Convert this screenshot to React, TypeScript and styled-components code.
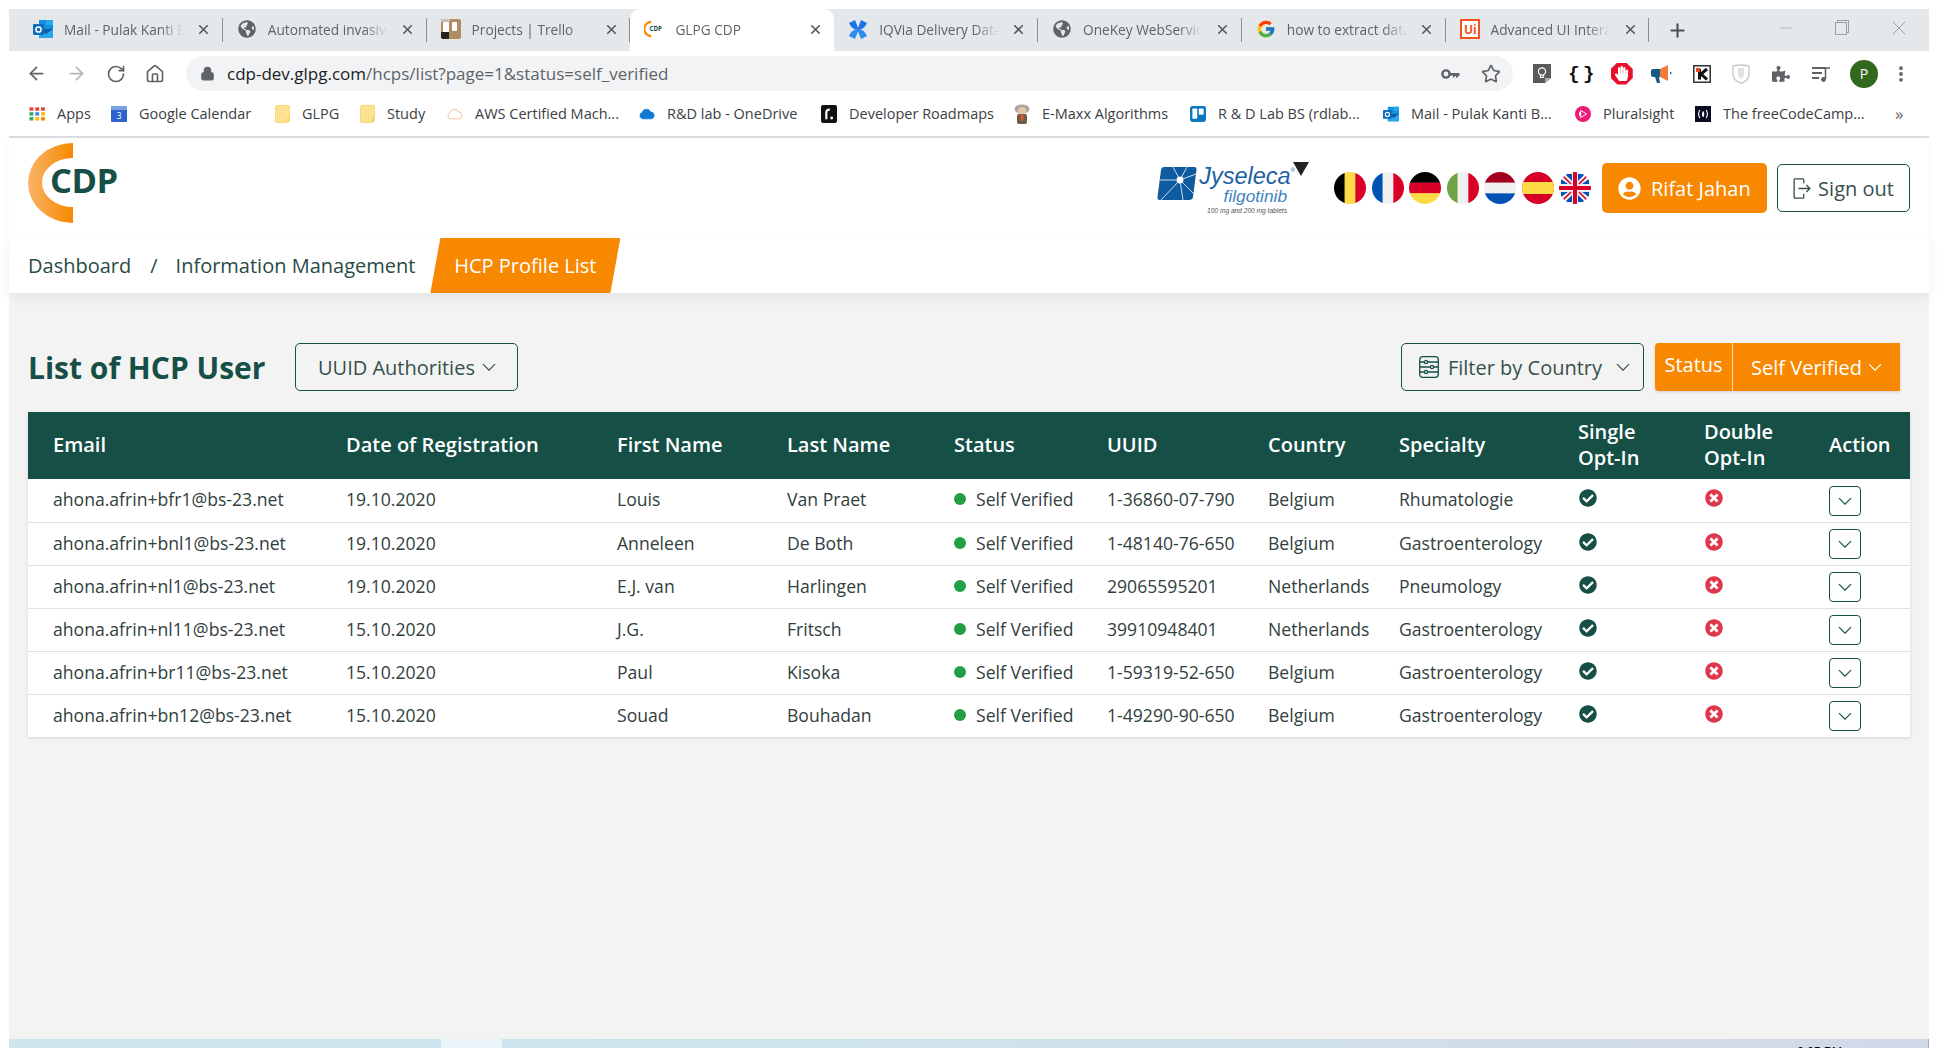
import React from 'react'
import styled, { createGlobalStyle } from 'styled-components'
import { ArrowLeft, ArrowRight, RotateCw, Home, Lock, Star, X, Plus, Minus, MoreVertical } from 'lucide-react'
import { FaGlobeAmericas, FaPuzzlePiece, FaCheckCircle, FaTimesCircle, FaUserCircle, FaHandPaper } from 'react-icons/fa'
import { FcGoogle } from 'react-icons/fc'

const GREEN = '#154f46'
const ORANGE = '#f78800'

const GlobalStyle = createGlobalStyle`
  * { box-sizing: border-box; }
  html, body { margin: 0; padding: 0; background: #fff; }
  body { font-family: "Open Sans", "Noto Sans", sans-serif; color: #2d3f3c; }
`

const Frame = styled.div`
  height: 1048px;
  padding: 9px 9px 0;
  display: flex;
  flex-direction: column;
  overflow: hidden;
`
const TabStrip = styled.div`
  height: 42px;
  background: #e5e8eb;
  display: flex;
  align-items: stretch;
  padding-left: 10px;
  flex-shrink: 0;
`
const Tab = styled.div<{ $active?: boolean }>`
  width: 203.8px;
  display: flex;
  align-items: center;
  padding: 0 7px 2px 14px;
  background: ${(p) => (p.$active ? '#fff' : 'transparent')};
  border-radius: ${(p) => (p.$active ? '10px 10px 0 0' : '0')};
  position: relative;
  &::after {
    content: '';
    display: ${(p) => (p.$active ? 'none' : 'block')};
    position: absolute;
    right: 0;
    top: 9px;
    bottom: 9px;
    width: 1px;
    background: #8a8f93;
  }
`
const TabIcon = styled.span`
  width: 20px;
  height: 20px;
  display: flex;
  align-items: center;
  justify-content: center;
  flex-shrink: 0;
  margin-right: 11px;
`
const TabTitle = styled.span`
  flex: 1;
  font-size: 13.7px;
  color: #5f6368;
  white-space: nowrap;
  overflow: hidden;
  -webkit-mask-image: linear-gradient(to right, #000 80%, transparent 100%);
  mask-image: linear-gradient(to right, #000 80%, transparent 100%);
`
const TabClose = styled.span`
  width: 24px;
  display: flex;
  justify-content: center;
  color: #55595e;
  margin-left: 8px;
`
const NewTab = styled.span`
  margin-left: 18px;
  display: flex;
  align-items: center;
  color: #4d5156;
`
const WindowButtons = styled.div`
  margin-left: auto;
  display: flex;
  align-items: center;
  gap: 40px;
  padding-right: 18px;
  padding-bottom: 4px;
  color: #9aa0a6;
`
const Restore = styled.span`
  width: 12px;
  height: 13px;
  border: 1px solid #9aa0a6;
  box-shadow: 2px -2px 0 -1px #e5e8eb, 2px -2px 0 0 #9aa0a6;
`
const BrowserBar = styled.div`
  height: 45px;
  display: flex;
  align-items: center;
  flex-shrink: 0;
`
const NavIcons = styled.div`
  width: 177px;
  padding-left: 17px;
  display: flex;
  align-items: center;
  gap: 19px;
  flex-shrink: 0;
  color: #5f6368;
`
const AddressBar = styled.div`
  width: 1327px;
  height: 35px;
  background: #f1f3f4;
  border-radius: 18px;
  display: flex;
  align-items: center;
  padding: 0 12px 0 14px;
  color: #5f6368;
`
const Url = styled.span`
  margin-left: 12px;
  flex: 1;
  font-size: 17px;
  color: #5f6368;
  white-space: nowrap;
  b { font-weight: 400; color: #202124; }
`
const AddressActions = styled.div`
  display: flex;
  align-items: center;
  gap: 21px;
  color: #5f6368;
`
const Extensions = styled.div`
  flex: 1;
  display: flex;
  align-items: center;
  justify-content: space-between;
  padding: 0 23px 0 18px;
`
const Ext = styled.span`
  width: 22px;
  height: 22px;
  display: flex;
  align-items: center;
  justify-content: center;
  color: #5f6368;
`
const KebabExt = styled(Ext)`
  width: 10px;
`
const StopBadge = styled.span`
  width: 22px;
  height: 22px;
  background: #e8102a;
  clip-path: polygon(30% 0, 70% 0, 100% 30%, 100% 70%, 70% 100%, 30% 100%, 0 70%, 0 30%);
  color: #fff;
  display: flex;
  align-items: center;
  justify-content: center;
`
const Braces = styled.span`
  font-family: "Liberation Mono", monospace;
  font-size: 19px;
  font-weight: 700;
  color: #111;
  white-space: nowrap;
  letter-spacing: -4px;
  margin-left: -5px;
`
const Avatar = styled.span`
  width: 28px;
  height: 28px;
  border-radius: 50%;
  background: #33691e;
  color: #fff;
  font-size: 14px;
  display: flex;
  align-items: center;
  justify-content: center;
`
const BookmarkBar = styled.div`
  height: 42px;
  display: flex;
  align-items: center;
  padding-left: 20px;
  flex-shrink: 0;
  border-bottom: 2px solid #dcdce4;
  padding-bottom: 5px;
`
const Bookmark = styled.div<{ $width: number }>`
  width: ${(p) => p.$width}px;
  flex-shrink: 0;
  display: flex;
  align-items: center;
  gap: 12px;
  font-size: 14.5px;
  color: #3c4043;
  white-space: nowrap;
`
const BookmarkIcon = styled.span`
  width: 16px;
  height: 16px;
  flex-shrink: 0;
  display: flex;
  align-items: center;
  justify-content: center;
`
const More = styled.span`
  margin-left: 4px;
  font-size: 17px;
  color: #5f6368;
`

const Header = styled.header`
  height: 100px;
  flex-shrink: 0;
  background: #fff;
  display: flex;
  align-items: center;
  justify-content: space-between;
  padding: 0 19px;
  box-shadow: 0 2px 6px rgba(0, 0, 0, 0.04);
  position: relative;
`
const LogoBox = styled.div`
  position: relative;
  width: 95px;
  height: 80px;
  margin-top: -10px;
`
const LogoText = styled.span`
  position: absolute;
  left: 22px;
  top: 16px;
  font-size: 34.5px;
  font-weight: 700;
  line-height: 42px;
  letter-spacing: -0.5px;
  color: ${GREEN};
`
const HeaderRight = styled.div`
  display: flex;
  align-items: center;
`
const Brand = styled.div`
  position: relative;
  width: 152px;
  height: 50px;
  display: flex;
  gap: 4px;
  margin-right: 25px;
  svg { margin-top: 3px; flex-shrink: 0; }
`
const BrandText = styled.div`
  display: flex;
  flex-direction: column;
  align-items: flex-end;
  width: 94px;
  font-style: italic;
  font-family: "Liberation Sans", sans-serif;
  color: #1c5fa5;
`
const BrandName = styled.span`
  font-size: 23.5px;
  line-height: 24px;
  margin-top: 1px;
  white-space: nowrap;
  sup { font-size: 6px; vertical-align: top; line-height: 12px; }
`
const BrandGeneric = styled.span`
  font-size: 17.3px;
  line-height: 16px;
  margin-right: 8px;
  color: #3d82c4;
`
const BrandDose = styled.span`
  font-size: 6.6px;
  line-height: 9px;
  margin: 2px 8px 0 0;
  white-space: nowrap;
  color: #555;
`
const Caret = styled.span`
  position: absolute;
  right: 0;
  top: -1px;
  width: 0;
  height: 0;
  border-left: 8.5px solid transparent;
  border-right: 8.5px solid transparent;
  border-top: 14px solid #222;
`
const Flags = styled.div`
  display: flex;
  gap: 5.5px;
  margin-right: 11px;
`
const Flag = styled.span`
  width: 32px;
  height: 32px;
  border-radius: 50%;
  overflow: hidden;
  display: block;
  svg { display: block; }
`
const UserButton = styled.div`
  width: 165px;
  height: 50px;
  background: ${ORANGE};
  border-radius: 5px;
  color: #fff;
  font-size: 20px;
  display: flex;
  align-items: center;
  gap: 10px;
  padding-left: 16px;
  margin-right: 10px;
  white-space: nowrap;
`
const OutlineButton = styled.div<{ $width: number }>`
  width: ${(p) => p.$width}px;
  height: 48px;
  border: 1px solid ${GREEN};
  border-radius: 5px;
  background: transparent;
  color: #35504c;
  font-size: 20px;
  display: flex;
  align-items: center;
  justify-content: center;
  gap: 7px;
  white-space: nowrap;
`
const FilterButton = styled(OutlineButton)`
  gap: 9px;
  padding-left: 4px;
`
const Breadcrumb = styled.nav`
  height: 55px;
  flex-shrink: 0;
  background: #fff;
  display: flex;
  align-items: center;
  padding-left: 19px;
  font-size: 20px;
  color: #2a4a46;
  box-shadow: 0 4px 12px rgba(0, 0, 0, 0.07);
  position: relative;
`
const Crumb = styled.span`
  white-space: nowrap;
`
const Slash = styled.span`
  margin: 0 18px 0 19px;
`
const ActiveCrumb = styled.span`
  height: 100%;
  width: 190px;
  margin-left: 15px;
  display: flex;
  align-items: center;
  justify-content: center;
  background: ${ORANGE};
  color: #fff;
  clip-path: polygon(10px 0, 100% 0, calc(100% - 10px) 100%, 0 100%);
`
const Main = styled.main`
  flex: 1;
  background: #f3f3f3;
  padding: 50px 19px 0;
`
const Toolbar = styled.div`
  height: 48px;
  display: flex;
  align-items: center;
  gap: 30px;
  margin-bottom: 21px;
`
const Title = styled.h1`
  margin: 0;
  font-size: 30px;
  font-weight: 700;
  color: ${GREEN};
  white-space: nowrap;
`
const ToolbarRight = styled.div`
  margin-left: auto;
  display: flex;
  gap: 11px;
  padding-right: 10px;
`
const FilterChevron = styled.span`
  display: flex;
  margin-left: 5px;
`
const StatusGroup = styled.div`
  width: 245px;
  height: 48px;
  background: ${ORANGE};
  border-radius: 4px 0 0 4px;
  color: #fff;
  display: flex;
  box-shadow: 0 1px 3px rgba(0, 0, 0, 0.15);
`
const StatusLabel = styled.span`
  width: 78px;
  border-right: 1px solid #ffd9a8;
  font-size: 20px;
  display: flex;
  align-items: center;
  justify-content: center;
  padding-bottom: 5px;
`
const StatusValue = styled.span`
  flex: 1;
  font-size: 20px;
  white-space: nowrap;
  display: flex;
  align-items: center;
  justify-content: center;
  gap: 6px;
`
const Table = styled.table`
  width: 100%;
  table-layout: fixed;
  border-collapse: collapse;
  background: #fff;
  box-shadow: 0 1px 3px rgba(0, 0, 0, 0.12);
`
const Th = styled.th`
  height: 67px;
  background: ${GREEN};
  color: #fff;
  font-size: 20px;
  font-weight: 600;
  line-height: 26px;
  text-align: left;
  padding: 0 0 1px 25px;
  white-space: nowrap;
`
const Tr = styled.tr`
  height: 43px;
  border-bottom: 1px solid #dee2e6;
  &:last-child { border-bottom: 0; }
`
const Td = styled.td`
  font-size: 17.6px;
  color: #30403d;
  padding: 0 0 2px 25px;
  white-space: nowrap;
`
const StatusCell = styled.span`
  display: flex;
  align-items: center;
  gap: 10px;
`
const Dot = styled.span`
  width: 12px;
  height: 12px;
  border-radius: 50%;
  background: #22a045;
`
const OptIcon = styled.span<{ $color: string }>`
  display: flex;
  color: ${(p) => p.$color};
  margin: -2px 0 0 1px;
`
const ActionButton = styled.span`
  width: 32px;
  height: 30px;
  margin-top: 3px;
  border: 1px solid ${GREEN};
  border-radius: 4px;
  display: flex;
  align-items: center;
  justify-content: center;
  color: ${GREEN};
`
const Taskbar = styled.div`
  height: 9px;
  flex-shrink: 0;
  display: flex;
  justify-content: flex-end;
  overflow: hidden;
  background: linear-gradient(to right, #cde5ec 0%, #cde5ec 22.5%, #e8f4f8 22.5%, #e8f4f8 25.7%, #cde5ec 25.7%, #cfe2ea 60%, #d3d8e8 100%);
  border-right: 1px solid #9fb0c8;
  padding-right: 86px;
`
const Clock = styled.span`
  font-family: "Liberation Sans", sans-serif;
  font-size: 12px;
  line-height: 14px;
  margin-top: 6px;
  color: #000;
`

const OutlookIcon = () => (
  <svg width="20" height="18" viewBox="0 0 20 18">
    <rect x="6" y="0" width="14" height="9" fill="#1490df" />
    <rect x="13" y="0" width="7" height="5" fill="#28a8ea" />
    <path d="M6 9 H20 V17 Q20 18 19 18 H7 Q6 18 6 17 Z" fill="#0a5ca8" />
    <path d="M6 9 L13 14 L20 9 V18 H6 Z" fill="#28a8ea" />
    <rect x="0" y="4" width="11" height="11" rx="1" fill="#0f6cbd" />
    <circle cx="5.5" cy="9.5" r="2.6" fill="none" stroke="#fff" strokeWidth="1.5" />
  </svg>
)
const TrelloTabIcon = () => (
  <svg width="20" height="20" viewBox="0 0 20 20">
    <rect width="20" height="20" rx="2" fill="#b08c64" />
    <rect x="0" y="0" width="9" height="3" fill="#c7bfb2" />
    <rect x="2" y="3" width="6" height="14" rx="1" fill="#fff" />
    <rect x="11" y="3" width="5" height="9" rx="1" fill="#fff" />
    <path d="M0 13 H8 V20 H2 Q0 20 0 18 Z" fill="#24211e" />
  </svg>
)
const CdpFavicon = () => (
  <svg width="22" height="20" viewBox="0 0 22 20">
    <path d="M8 1 A9 9 0 0 0 8 19 L8 16.5 A6.5 6.5 0 0 1 8 3.5 Z" fill={ORANGE} />
    <text x="6" y="12.5" fontSize="6.8" fontWeight="700" fill={GREEN} fontFamily="Open Sans">CDP</text>
  </svg>
)
const IqviaIcon = () => (
  <svg width="20" height="21" viewBox="0 0 20 21">
    <path d="M1 4 L7 1 Q9 6 10 9 Q11 6 13 1 L19 4 Q16 11 10 11 Q4 11 1 4 Z" fill="#1a73e8" />
    <path d="M1 17 L7 20 Q9 15 10 12.5 Q11 15 13 20 L19 17 Q16 10 10 10 Q4 10 1 17 Z" fill="#2f8cf0" />
  </svg>
)
const UiIcon = () => (
  <svg width="20" height="20" viewBox="0 0 20 20">
    <rect x="1" y="1" width="18" height="18" fill="#fff" stroke="#f4511e" strokeWidth="2" />
    <text x="4" y="15" fontSize="12" fontWeight="700" fill="#f4511e" fontFamily="Open Sans">Ui</text>
  </svg>
)
const Folder = () => (
  <svg width="15" height="18" viewBox="0 0 15 18">
    <path d="M2 0.5 H13 Q14.5 0.5 14.5 2 V14 L12 17.5 H2 Q0.5 17.5 0.5 16 V2 Q0.5 0.5 2 0.5 Z" fill="#fde293" stroke="#f4d25f" strokeWidth="0.8" />
    <rect x="12" y="13" width="2.5" height="4" fill="#f4d25f" />
  </svg>
)
const AppsIcon = () => (
  <svg width="18" height="16" viewBox="0 0 18 16">
    {['#ea4335', '#ea4335', '#ea4335', '#34a853', '#4285f4', '#fbbc04', '#34a853', '#fbbc04', '#ea8600'].map((c, i) => (
      <rect key={i} x={0.5 + (i % 3) * 6.5} y={0.5 + Math.floor(i / 3) * 5.5} width="4.4" height="3.8" fill={c} />
    ))}
  </svg>
)
const CalendarIcon = () => (
  <svg width="20" height="20" viewBox="0 0 20 20">
    <rect y="0" width="20" height="20" rx="1" fill="#2e63cf" />
    <rect y="0" width="20" height="5" fill="#7b9fe3" />
    <text x="10" y="16" fontSize="11" textAnchor="middle" fill="#fff" fontFamily="Open Sans">3</text>
  </svg>
)
const CloudIcon = ({ fill, stroke }: { fill: string; stroke: string }) => (
  <svg width="20" height="14" viewBox="0 0 20 14">
    <path d="M5 13 A4 4 0 0 1 4 5.2 A5.5 5.5 0 0 1 14.5 4.5 A4.3 4.3 0 0 1 15.5 13 Z" fill={fill} stroke={stroke} strokeWidth="1" />
  </svg>
)
const TrelloIcon = () => (
  <svg width="20" height="20" viewBox="0 0 20 20">
    <rect width="20" height="20" rx="3" fill="#0b79bf" />
    <rect x="3" y="3" width="6" height="13" rx="1" fill="#fff" />
    <rect x="11" y="3" width="6" height="8" rx="1" fill="#fff" />
  </svg>
)
const EmaxxIcon = () => (
  <svg width="16" height="20" viewBox="0 0 16 20">
    <ellipse cx="8" cy="5" rx="7.5" ry="4.6" fill="#a9a5a0" />
    <ellipse cx="8" cy="6.5" rx="4" ry="3.6" fill="#e3c9a8" />
    <rect x="3" y="10" width="10" height="10" rx="2" fill="#6f5a43" />
    <rect x="6.5" y="10.5" width="3" height="6" fill="#d65c3a" />
  </svg>
)
const PluralsightIcon = () => (
  <svg width="20" height="20" viewBox="0 0 20 20">
    <circle cx="10" cy="10" r="10" fill="#ec1b78" />
    <path d="M7 5.5 L14.5 10 L7 14.5 Z" fill="none" stroke="#fff" strokeWidth="1.2" />
    <path d="M5 7.5 L8.5 10 L5 12.5 Z" fill="#fff" />
  </svg>
)
const FreeCodeIcon = () => (
  <svg width="20" height="20" viewBox="0 0 20 20">
    <rect width="20" height="20" fill="#0a0a23" />
    <path d="M6 5 Q3 10 6 15 M14 5 Q17 10 14 15" stroke="#fff" strokeWidth="1.4" fill="none" />
    <path d="M10 6 Q13 10 10.5 14 Q7 12 10 6 Z" fill="#fff" />
  </svg>
)
const RoadmapIcon = () => (
  <svg width="18" height="20" viewBox="0 0 18 20">
    <rect width="18" height="20" rx="2" fill="#111" />
    <path d="M6 16 V8 Q6 5 10 5" stroke="#fff" strokeWidth="2.4" fill="none" />
    <circle cx="12" cy="14.5" r="1.6" fill="#fff" />
  </svg>
)
const KeyIcon = () => (
  <svg width="19" height="12" viewBox="0 0 19 12">
    <circle cx="5" cy="6" r="3.6" fill="none" stroke="#5f6368" strokeWidth="2.4" />
    <path d="M9 5 H18.5 V8 H17 V9.5 H15 V8 H13.5 V9.5 H12 V7.5 H9 Z" fill="#5f6368" />
  </svg>
)
const KeepIcon = () => (
  <svg width="20" height="21" viewBox="0 0 20 21">
    <path d="M1 1 H19 V15 L13 20 H1 Z" fill="#5a5a5a" />
    <path d="M13 20 V15 H19 Z" fill="#a9a9a9" />
    <circle cx="10" cy="8.5" r="3.6" fill="none" stroke="#fff" strokeWidth="1.2" />
    <path d="M8.5 12 V14.5 H11.5 V12" fill="none" stroke="#fff" strokeWidth="1.2" />
  </svg>
)
const MegaphoneIcon = () => (
  <svg width="21" height="20" viewBox="0 0 21 20">
    <path d="M0 7 Q0 5 2 5 H9 V13 H2 Q0 13 0 11 Z" fill="#155a82" />
    <path d="M4 13 H8 L9 19 H6 Z" fill="#155a82" />
    <path d="M9 5 L17 1 V17 L9 13 Z" fill="#f5793a" />
    <path d="M19 7.5 L21 9 L19 10.5 Z" fill="#155a82" />
  </svg>
)
const ShieldIcon = () => (
  <svg width="18" height="20" viewBox="0 0 18 20">
    <path d="M1 2 Q9 0 17 2 V10 Q17 16 9 19.5 Q1 16 1 10 Z" fill="#fff" stroke="#c6c9cc" strokeWidth="1.4" />
    <path d="M6 4 H12 V10 Q12 13 9 15 Q6 13 6 10 Z" fill="#dfe1e3" />
  </svg>
)
const KIcon = () => (
  <svg width="18" height="18" viewBox="0 0 18 18">
    <rect x="0.8" y="0.8" width="16.4" height="16.4" fill="#fff" stroke="#222" strokeWidth="1.4" />
    <path d="M6.5 4 V14.5 M14 4 L8 9 L14 14.5" stroke="#111" strokeWidth="3" fill="none" />
    <rect x="3" y="3" width="4" height="4" fill="#e8431f" />
  </svg>
)
const QueueIcon = () => (
  <svg width="20" height="18" viewBox="0 0 20 18">
    <path d="M1 3 H15 M1 8 H11 M1 13 H8" stroke="#5f6368" strokeWidth="1.8" />
    <path d="M14.5 14 V3 H19" stroke="#5f6368" strokeWidth="1.6" fill="none" />
    <circle cx="12.5" cy="14.5" r="2.4" fill="#5f6368" />
  </svg>
)
const MainLogo = () => (
  <svg width="45" height="80" viewBox="0 0 45 80">
    <defs>
      <linearGradient id="logoArc" x1="0" x2="1" y1="0" y2="0">
        <stop offset="0" stopColor="#f9b469" />
        <stop offset="1" stopColor={ORANGE} />
      </linearGradient>
    </defs>
    <path d="M45 0 A45 40 0 0 0 45 80 L45 64 A31 24.5 0 0 1 45 15 Z" fill="url(#logoArc)" />
  </svg>
)
const BrandMark = () => (
  <svg width="40" height="36" viewBox="0 0 40 36">
    <path d="M7 1 H37 Q40 1 39.5 4 L36 31 Q35.5 34 32 34 H3 Q0 34 0.5 31 L4 4 Q4.5 1 7 1 Z" fill="#0f5b9f" />
    <path d="M23 14 L16 1 M23 14 L30 1 M23 14 L39 8 M23 14 L37 28 M23 14 L26 34 M23 14 L4 34 M23 14 L3 14" stroke="#dcebf7" strokeWidth="0.9" />
    <circle cx="23" cy="14" r="3.4" fill="#fff" />
  </svg>
)
const SignOutIcon = () => (
  <svg width="18" height="21" viewBox="0 0 20 24" fill="none" stroke="#35504c" strokeWidth="1.5">
    <path d="M12 6 V2 Q12 1 11 1 H2 Q1 1 1 2 V22 Q1 23 2 23 H11 Q12 23 12 22 V18" />
    <path d="M6 12 H19 M15 8 L19 12 L15 16" />
  </svg>
)
const FilterIcon = () => (
  <svg width="20" height="22" viewBox="0 0 20 22" fill="none" stroke={GREEN} strokeWidth="1.3">
    <rect x="0.7" y="0.7" width="18.6" height="20.6" rx="3" />
    <path d="M1 6 H19 M1 11 H19 M1 16 H19" />
    <circle cx="7" cy="6" r="1.6" fill="#f3f3f3" />
    <circle cx="13" cy="11" r="1.6" fill="#f3f3f3" />
    <circle cx="7" cy="16" r="1.6" fill="#f3f3f3" />
  </svg>
)
const Chevron = ({ size = 14, color = 'currentColor' }: { size?: number; color?: string }) => (
  <svg width={size} height={size * 0.6} viewBox="0 0 14 8" fill="none" stroke={color} strokeWidth="1.2">
    <path d="M1 1 L7 7 L13 1" />
  </svg>
)

const Stripes = ({ colors, vertical }: { colors: string[]; vertical?: boolean }) => (
  <svg width="32" height="32" viewBox="0 0 32 32">
    {colors.map((c, i) =>
      vertical ? (
        <rect key={i} x={(i * 32) / colors.length} y="0" width={32 / colors.length + 0.2} height="32" fill={c} />
      ) : (
        <rect key={i} x="0" y={(i * 32) / colors.length} width="32" height={32 / colors.length + 0.2} fill={c} />
      )
    )}
  </svg>
)
const SpainFlag = () => (
  <svg width="32" height="32" viewBox="0 0 32 32">
    <rect width="32" height="32" fill="#d80027" />
    <rect y="10" width="32" height="12" fill="#ffda44" />
  </svg>
)
const UkFlag = () => (
  <svg width="32" height="32" viewBox="0 0 32 32">
    <rect width="32" height="32" fill="#f0f0f0" />
    <path d="M6 2 L13 9 V2 Z M26 2 L19 9 V2 Z M2 7 L9 12 H2 Z M30 7 L23 12 H30 Z M2 25 L9 20 H2 Z M30 25 L23 20 H30 Z M6 30 L13 23 V30 Z M26 30 L19 23 V30 Z" fill="#0052b4" />
    <rect x="14" width="4" height="32" fill="#d80027" />
    <rect y="14" width="32" height="4" fill="#d80027" />
    <path d="M3 3 L12 12 M29 29 L20 20 M29 3 L20 12 M3 29 L12 20" stroke="#d80027" strokeWidth="1.6" />
  </svg>
)

const tabs: { title: string; icon: React.ReactNode; active?: boolean }[] = [
  { title: 'Mail - Pulak Kanti Bhattacharyya', icon: <OutlookIcon /> },
  { title: 'Automated invasive ductal', icon: <FaGlobeAmericas size={18} color="#5f6368" /> },
  { title: 'Projects | Trello', icon: <TrelloTabIcon /> },
  { title: 'GLPG CDP', icon: <CdpFavicon />, active: true },
  { title: 'IQVia Delivery Data', icon: <IqviaIcon /> },
  { title: 'OneKey WebService', icon: <FaGlobeAmericas size={18} color="#5f6368" /> },
  { title: 'how to extract data', icon: <FcGoogle size={20} /> },
  { title: 'Advanced UI Interaction', icon: <UiIcon /> },
]

const bookmarks: { label: string; width: number; icon: React.ReactNode }[] = [
  { label: 'Apps', width: 82, icon: <AppsIcon /> },
  { label: 'Google Calendar', width: 163, icon: <CalendarIcon /> },
  { label: 'GLPG', width: 85, icon: <Folder /> },
  { label: 'Study', width: 88, icon: <Folder /> },
  { label: 'AWS Certified Mach...', width: 192, icon: <CloudIcon fill="#fff" stroke="#f0b48a" /> },
  { label: 'R&D lab - OneDrive', width: 182, icon: <CloudIcon fill="#0f78d4" stroke="#0f78d4" /> },
  { label: 'Developer Roadmaps', width: 193, icon: <RoadmapIcon /> },
  { label: 'E-Maxx Algorithms', width: 176, icon: <EmaxxIcon /> },
  { label: 'R & D Lab BS (rdlab...', width: 193, icon: <TrelloIcon /> },
  { label: 'Mail - Pulak Kanti B...', width: 192, icon: <OutlookIcon /> },
  { label: 'Pluralsight', width: 120, icon: <PluralsightIcon /> },
  { label: 'The freeCodeCamp...', width: 196, icon: <FreeCodeIcon /> },
]

const columns = [
  { label: ['Email'], width: 293 },
  { label: ['Date of Registration'], width: 271 },
  { label: ['First Name'], width: 170 },
  { label: ['Last Name'], width: 167 },
  { label: ['Status'], width: 153 },
  { label: ['UUID'], width: 161 },
  { label: ['Country'], width: 131 },
  { label: ['Specialty'], width: 179 },
  { label: ['Single', 'Opt-In'], width: 126 },
  { label: ['Double', 'Opt-In'], width: 125 },
  { label: ['Action'], width: 106 },
]

const users = [
  ['ahona.afrin+bfr1@bs-23.net', '19.10.2020', 'Louis', 'Van Praet', '1-36860-07-790', 'Belgium', 'Rhumatologie'],
  ['ahona.afrin+bnl1@bs-23.net', '19.10.2020', 'Anneleen', 'De Both', '1-48140-76-650', 'Belgium', 'Gastroenterology'],
  ['ahona.afrin+nl1@bs-23.net', '19.10.2020', 'E.J. van', 'Harlingen', '29065595201', 'Netherlands', 'Pneumology'],
  ['ahona.afrin+nl11@bs-23.net', '15.10.2020', 'J.G.', 'Fritsch', '39910948401', 'Netherlands', 'Gastroenterology'],
  ['ahona.afrin+br11@bs-23.net', '15.10.2020', 'Paul', 'Kisoka', '1-59319-52-650', 'Belgium', 'Gastroenterology'],
  ['ahona.afrin+bn12@bs-23.net', '15.10.2020', 'Souad', 'Bouhadan', '1-49290-90-650', 'Belgium', 'Gastroenterology'],
]

export default function App() {
  return (
    <Frame>
      <GlobalStyle />
      <TabStrip>
        {tabs.map((tab) => (
          <Tab key={tab.title} $active={tab.active}>
            <TabIcon>{tab.icon}</TabIcon>
            <TabTitle>{tab.title}</TabTitle>
            <TabClose><X size={15} strokeWidth={2.6} /></TabClose>
          </Tab>
        ))}
        <NewTab><Plus size={21} strokeWidth={2.4} /></NewTab>
        <WindowButtons>
          <Minus size={18} strokeWidth={1} />
          <Restore />
          <X size={24} strokeWidth={1} />
        </WindowButtons>
      </TabStrip>

      <BrowserBar>
        <NavIcons>
          <ArrowLeft size={21} />
          <ArrowRight size={21} color="#b4b7bb" />
          <RotateCw size={20} />
          <Home size={20} />
        </NavIcons>
        <AddressBar>
          <Lock size={15} fill="#5f6368" />
          <Url><b>cdp-dev.glpg.com</b>/hcps/list?page=1&amp;status=self_verified</Url>
          <AddressActions>
            <KeyIcon />
            <Star size={20} />
          </AddressActions>
        </AddressBar>
        <Extensions>
          <Ext><KeepIcon /></Ext>
          <Ext><Braces>{'{ }'}</Braces></Ext>
          <Ext><StopBadge><FaHandPaper size={15} /></StopBadge></Ext>
          <Ext><MegaphoneIcon /></Ext>
          <Ext><KIcon /></Ext>
          <Ext><ShieldIcon /></Ext>
          <Ext><FaPuzzlePiece size={18} /></Ext>
          <Ext><QueueIcon /></Ext>
          <Avatar>P</Avatar>
          <KebabExt><MoreVertical size={20} color="#5f6368" strokeWidth={2.6} style={{ flexShrink: 0 }} /></KebabExt>
        </Extensions>
      </BrowserBar>

      <BookmarkBar>
        {bookmarks.map((b) => (
          <Bookmark key={b.label} $width={b.width}>
            <BookmarkIcon>{b.icon}</BookmarkIcon>
            {b.label}
          </Bookmark>
        ))}
        <More>»</More>
      </BookmarkBar>

      <Header>
        <LogoBox>
          <MainLogo />
          <LogoText>CDP</LogoText>
        </LogoBox>
        <HeaderRight>
          <Brand>
            <BrandMark />
            <BrandText>
              <BrandName>Jyseleca<sup>®</sup></BrandName>
              <BrandGeneric>filgotinib</BrandGeneric>
              <BrandDose>100 mg and 200 mg tablets</BrandDose>
            </BrandText>
            <Caret />
          </Brand>
          <Flags>
            <Flag><Stripes vertical colors={['#000', '#ffda44', '#d80027']} /></Flag>
            <Flag><Stripes vertical colors={['#0052b4', '#f0f0f0', '#d80027']} /></Flag>
            <Flag><Stripes colors={['#000', '#d80027', '#ffda44']} /></Flag>
            <Flag><Stripes vertical colors={['#6da544', '#f0f0f0', '#d80027']} /></Flag>
            <Flag><Stripes colors={['#a2001d', '#f0f0f0', '#0052b4']} /></Flag>
            <Flag><SpainFlag /></Flag>
            <Flag><UkFlag /></Flag>
          </Flags>
          <UserButton><FaUserCircle size={23} />Rifat Jahan</UserButton>
          <OutlineButton $width={133}><SignOutIcon />Sign out</OutlineButton>
        </HeaderRight>
      </Header>

      <Breadcrumb>
        <Crumb>Dashboard</Crumb>
        <Slash>/</Slash>
        <Crumb>Information Management</Crumb>
        <ActiveCrumb>HCP Profile List</ActiveCrumb>
      </Breadcrumb>

      <Main>
        <Toolbar>
          <Title>List of HCP User</Title>
          <OutlineButton $width={223}>UUID Authorities <Chevron /></OutlineButton>
          <ToolbarRight>
            <FilterButton $width={243}>
              <FilterIcon />Filter by Country
              <FilterChevron><Chevron /></FilterChevron>
            </FilterButton>
            <StatusGroup>
              <StatusLabel>Status</StatusLabel>
              <StatusValue>Self Verified <Chevron color="#fff" /></StatusValue>
            </StatusGroup>
          </ToolbarRight>
        </Toolbar>

        <Table>
          <colgroup>
            {columns.map((c) => <col key={c.label.join()} style={{ width: c.width }} />)}
          </colgroup>
          <thead>
            <tr>
              {columns.map((c) => (
                <Th key={c.label.join()}>
                  {c.label.map((line, i) => <React.Fragment key={line}>{i > 0 && <br />}{line}</React.Fragment>)}
                </Th>
              ))}
            </tr>
          </thead>
          <tbody>
            {users.map((u) => (
              <Tr key={u[0]}>
                <Td>{u[0]}</Td>
                <Td>{u[1]}</Td>
                <Td>{u[2]}</Td>
                <Td>{u[3]}</Td>
                <Td><StatusCell><Dot />Self Verified</StatusCell></Td>
                <Td>{u[4]}</Td>
                <Td>{u[5]}</Td>
                <Td>{u[6]}</Td>
                <Td><OptIcon $color={GREEN}><FaCheckCircle size={18} /></OptIcon></Td>
                <Td><OptIcon $color="#e0364c"><FaTimesCircle size={18} /></OptIcon></Td>
                <Td><ActionButton><Chevron /></ActionButton></Td>
              </Tr>
            ))}
          </tbody>
        </Table>
      </Main>

      <Taskbar><Clock>9:05 PM</Clock></Taskbar>
    </Frame>
  )
}
